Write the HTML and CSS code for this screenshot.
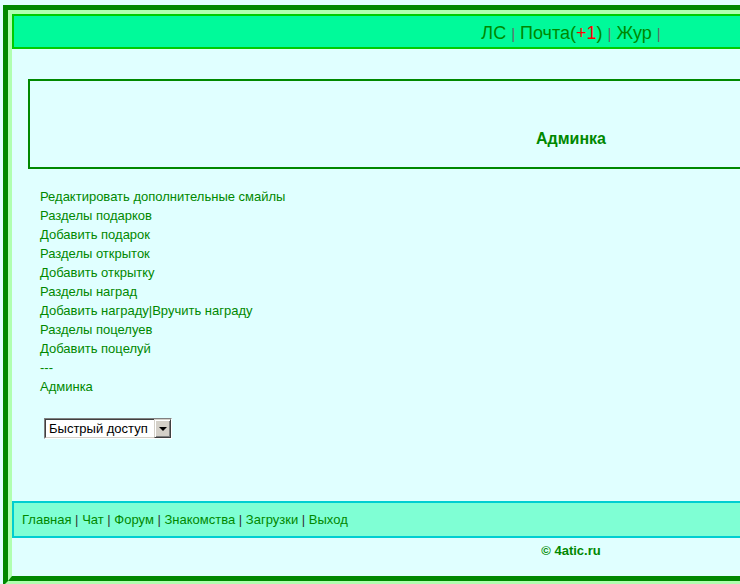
FILE: index.html
```html
<!DOCTYPE html>
<html lang="ru">

<head>
    <meta charset="UTF-8">
    <meta name="viewport" content="width=device-width, initial-scale=1.0">
    <title>Админка</title>
    <link rel="stylesheet" href="styles.css">
</head>

<body>

    <div class="frame">
        <div class="frame-in">

            <div class="topbar">
                <a href="#">ЛС</a> <span class="sep">|</span>
                <a href="#">Почта(<span class="new">+1</span>)</a> <span class="sep">|</span>
                <a href="#">Жур</a> <span class="sep">|</span>
            </div>

            <div class="title">Админка</div>

            <div class="menu">
                <a href="#">Редактировать дополнительные смайлы</a><br>
                <a href="#">Разделы подарков</a><br>
                <a href="#">Добавить подарок</a><br>
                <a href="#">Разделы открыток</a><br>
                <a href="#">Добавить открытку</a><br>
                <a href="#">Разделы наград</a><br>
                <a href="#">Добавить награду</a>|<a href="#">Вручить награду</a><br>
                <a href="#">Разделы поцелуев</a><br>
                <a href="#">Добавить поцелуй</a><br>
                ---<br>
                <a href="#">Админка</a>
            </div>

            <form class="quick">
                <div class="combo">
                    <select>
                        <option>Быстрый доступ</option>
                        <option>Главная</option>
                        <option>Чат</option>
                        <option>Форум</option>
                    </select>
                    <span class="drop"><span class="arrow"></span></span>
                </div>
            </form>

            <div class="foot">
                <a href="#">Главная</a> <span class="sep">|</span>
                <a href="#">Чат</a> <span class="sep">|</span>
                <a href="#">Форум</a> <span class="sep">|</span>
                <a href="#">Знакомства</a> <span class="sep">|</span>
                <a href="#">Загрузки</a> <span class="sep">|</span>
                <a href="#">Выход</a>
            </div>

            <div class="copy">&copy; 4atic.ru</div>

        </div>
    </div>

</body>

</html>
```

FILE: styles.css
```css
html, body {
    overflow: hidden;
}

body {
    margin: 0;
    background-color: lightcyan;
    font-family: "Liberation Sans", Arial, sans-serif;
    font-size: 13px;
    color: #008800;
}

a {
    color: #008800;
    text-decoration: none;
}

/* двойная рамка вокруг всей страницы */
.frame {
    width: 1136px;
    box-sizing: border-box;
    margin: 5px 0 0 3px;
    border: 5px solid;
    border-color: #008800 #b0ffb0 #b0ffb0 #008800;
}

.frame-in {
    border-style: solid;
    border-width: 4px 4px 5px 4px;
    border-color: #b0ffb0 #008800 #008800 #b0ffb0;
    padding-bottom: 16px;
}

.topbar {
    height: 29px;
    padding-top: 2px;
    border: 2px solid #00cc00;
    background-color: mediumspringgreen;
    text-align: center;
    font-size: 18px;
    line-height: 31px;
}

.topbar .sep {
    color: #666;
    font-size: 15px;
}

.new {
    color: red;
}

.title {
    margin: 30px 16px 0;
    border: 2px solid #008800;
    padding: 49px 0 19px;
    text-align: center;
    font-size: 16px;
    font-weight: bold;
    line-height: 18px;
}

.menu {
    margin: 18px 0 0 28px;
    line-height: 19px;
}

.quick {
    margin: 22px 0 0 32px;
}

/* выпадающий список в стиле старой винды */
.combo {
    display: inline-flex;
    width: 128px;
    height: 21px;
    box-sizing: border-box;
    border: 1px solid;
    border-color: #808080 #fff #fff #808080;
    background-color: #fff;
}

.combo select {
    flex: 1;
    min-width: 0;
    border: 1px solid;
    border-right: 0;
    border-color: #404040 #d4d0c8 #d4d0c8 #404040;
    padding: 0 0 0 3px;
    background: #fff;
    color: #000;
    font-family: "Liberation Sans", Arial, sans-serif;
    font-size: 13px;
    appearance: none;
    -webkit-appearance: none;
    outline: none;
}

.drop {
    display: flex;
    align-items: center;
    justify-content: center;
    width: 17px;
    box-sizing: border-box;
    border: 1px solid;
    border-color: #d4d0c8 #404040 #404040 #d4d0c8;
    box-shadow: inset 1px 1px 0 #fff, inset -1px -1px 0 #808080;
    background-color: #d4d0c8;
}

.arrow {
    width: 0;
    height: 0;
    border-left: 4px solid transparent;
    border-right: 4px solid transparent;
    border-top: 4px solid #000;
}

.foot {
    margin-top: 62px;
    height: 33px;
    border: 2px solid darkturquoise;
    background-color: aquamarine;
    padding-left: 8px;
    line-height: 33px;
    font-size: 13px;
}

.foot .sep {
    color: #333;
}

.copy {
    margin-top: 4px;
    text-align: center;
    font-weight: bold;
    line-height: 18px;
}
```
